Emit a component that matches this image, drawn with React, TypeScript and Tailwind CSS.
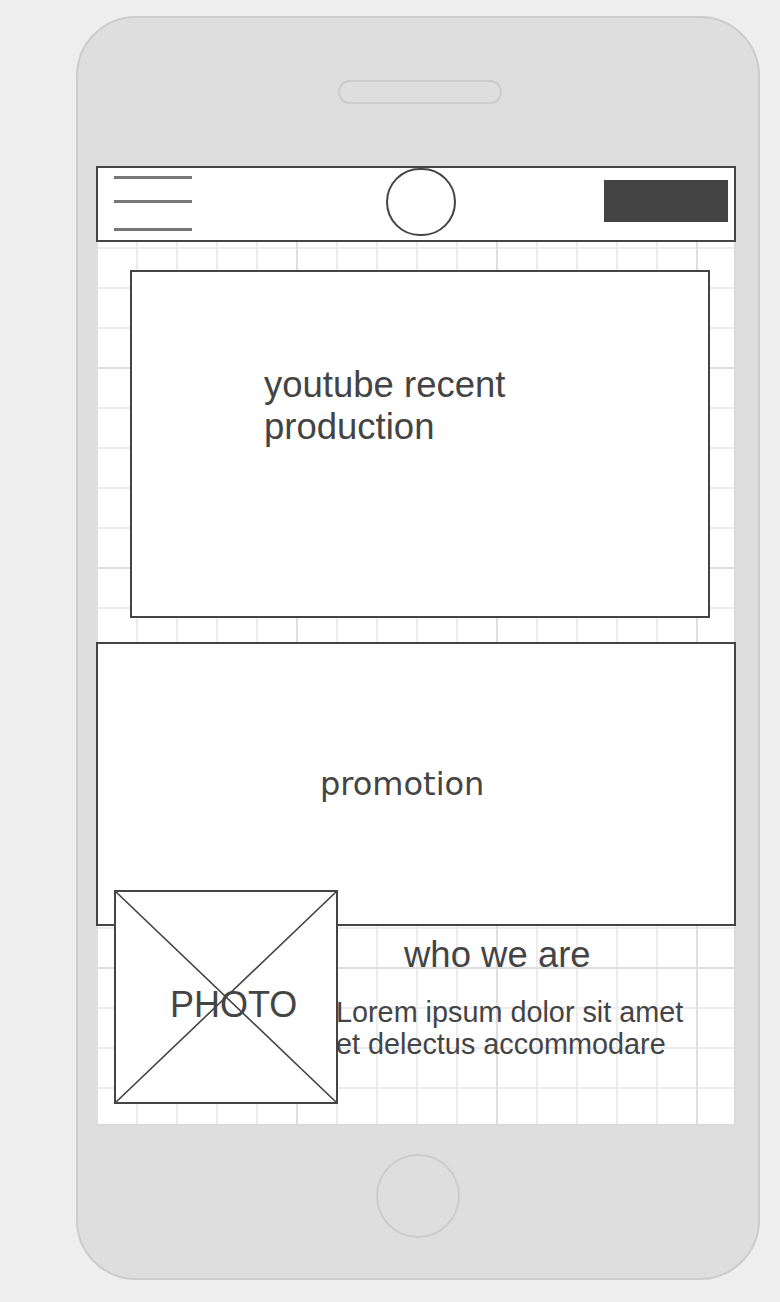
import React from "react";

export default function App() {
  return (
    <div className="w-[780px] h-[1302px] bg-[#eeeeee] pt-[16px] pl-[76px] font-['Liberation_Sans',Arial,sans-serif] text-[#444444]">
      <div className="w-[684px] h-[1264px] rounded-[60px] border-2 border-[#cccccc] bg-[#dedede] flex flex-col items-start">
        {/* speaker */}
        <div className="ml-[260px] mt-[62px] w-[164px] h-[24px] rounded-full border-2 border-[#cccccc]" />
        {/* screen */}
        <div className="ml-[18px] mt-[62px] w-[640px] h-[960px] bg-white border-r-2 border-b-2 border-[#dadada] bg-[linear-gradient(to_right,#dedede_2px,transparent_2px),linear-gradient(to_bottom,#dedede_2px,transparent_2px),linear-gradient(to_right,#ececec_2px,transparent_2px),linear-gradient(to_bottom,#ececec_2px,transparent_2px)] bg-[size:200px_200px,200px_200px,40px_40px,40px_40px] bg-[position:0_1px] flex flex-col">
          {/* header */}
          <div className="h-[76px] w-[640px] border-2 border-[#444444] bg-white flex items-start">
            <div className="ml-[16px] mt-[8px] flex flex-col">
              <div className="w-[78px] h-[3px] bg-[#777777]" />
              <div className="w-[78px] h-[3px] bg-[#777777] mt-[21px]" />
              <div className="w-[78px] h-[3px] bg-[#777777] mt-[25px]" />
            </div>
            <div className="ml-[194px] w-[70px] h-[68px] rounded-full border-2 border-[#444444]" />
            <div className="ml-[148px] mt-[12px] w-[124px] h-[42px] bg-[#444444]" />
          </div>
          {/* video */}
          <div className="ml-[34px] mt-[28px] w-[580px] h-[348px] border-2 border-[#444444] bg-white pl-[132px] pt-[92px]">
            <div className="text-[36.5px] leading-[42px]">
              youtube recent
              <br />
              production
            </div>
          </div>
          {/* promotion */}
          <div className="mt-[24px] w-[640px] h-[284px] border-2 border-[#444444] bg-white pl-[222px] pt-[120px]">
            <div className="font-['DejaVu_Sans',sans-serif] text-[32px] leading-[40px]">promotion</div>
          </div>
          {/* who we are */}
          <div className="-mt-[36px] pl-[18px] flex items-start">
            <div className="relative z-10 w-[224px] h-[214px] border-2 border-[#444444] bg-white">
              <svg className="absolute inset-0 w-full h-full" viewBox="0 0 220 210" preserveAspectRatio="none">
                <line x1="0" y1="0" x2="220" y2="210" stroke="#444444" strokeWidth="1.6" />
                <line x1="220" y1="0" x2="0" y2="210" stroke="#444444" strokeWidth="1.6" />
              </svg>
              <div className="relative pl-[54px] pt-[92px] text-[36px] leading-[42px]">PHOTO</div>
            </div>
            <div className="-ml-[2px] pt-[44px] flex flex-col">
              <div className="pl-[68px] text-[36.5px] leading-[42px]">who we are</div>
              <div className="mt-[20px] text-[28.8px] leading-[32px]">
                Lorem ipsum dolor sit amet
                <br />
                et delectus accommodare
              </div>
            </div>
          </div>
        </div>
        {/* home button */}
        <div className="ml-[298px] mt-[28px] w-[84px] h-[84px] rounded-full border-2 border-[#cccccc]" />
      </div>
    </div>
  );
}
